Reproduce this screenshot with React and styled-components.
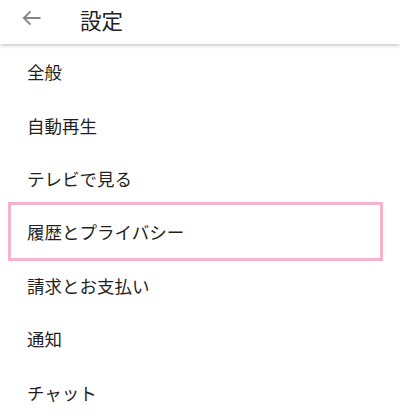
import React from 'react';
import styled, { createGlobalStyle } from 'styled-components';

const GlobalStyle = createGlobalStyle`
  html, body {
    margin: 0;
    padding: 0;
    background: #fff;
    font-family: Roboto, "Noto Sans CJK JP", sans-serif;
    overflow: hidden;
  }
`;

const Page = styled.div`
  width: 400px;
  height: 418px;
  background: #fff;
  overflow: hidden;
`;

const Header = styled.header`
  position: relative;
  z-index: 2;
  height: 44px;
  display: flex;
  align-items: center;
  background: #fff;
  box-shadow: 0 1px 4px rgba(0, 0, 0, 0.28);
`;

const BackBtn = styled.button`
  width: 62px;
  height: 44px;
  padding: 0 0 8px 22px;
  border: 0;
  background: none;
  display: flex;
  align-items: center;
  color: #858585;
`;

const Title = styled.h1`
  margin: 0 0 6px 18px;
  font-family: "Noto Sans CJK JP", sans-serif;
  font-size: 21.5px;
  font-weight: 400;
  color: #212121;
`;

const List = styled.ul`
  list-style: none;
  margin: 0;
  padding: 1px 0 0;
`;

const Item = styled.li`
  position: relative;
  height: 53.4px;
  display: flex;
  align-items: center;
  padding-left: 27px;
  font-family: "Noto Sans CJK JP", sans-serif;
  font-size: 17.5px;
  color: #1f1f1f;

  ${(props) =>
    props.highlighted &&
    `
    &::after {
      content: '';
      position: absolute;
      top: -3px;
      bottom: -2px;
      left: 8px;
      right: 17px;
      border: 3.5px solid #f5b2cb;
    }
  `}
`;

const items = [
  '全般',
  '自動再生',
  'テレビで見る',
  '履歴とプライバシー',
  '請求とお支払い',
  '通知',
  'チャット',
];

const App = () => (
  <Page>
    <GlobalStyle />
    <Header>
      <BackBtn aria-label="戻る">
        <svg width="19" height="16" viewBox="0 0 19 16" fill="none" stroke="currentColor" strokeWidth="1.8">
          <path d="M18.5 8H2 M8.5 1.3 L1.8 8 L8.5 14.7" />
        </svg>
      </BackBtn>
      <Title>設定</Title>
    </Header>
    <List>
      {items.map((label, i) => (
        <Item key={label} highlighted={i === 3}>
          {label}
        </Item>
      ))}
    </List>
  </Page>
);

export default App;
